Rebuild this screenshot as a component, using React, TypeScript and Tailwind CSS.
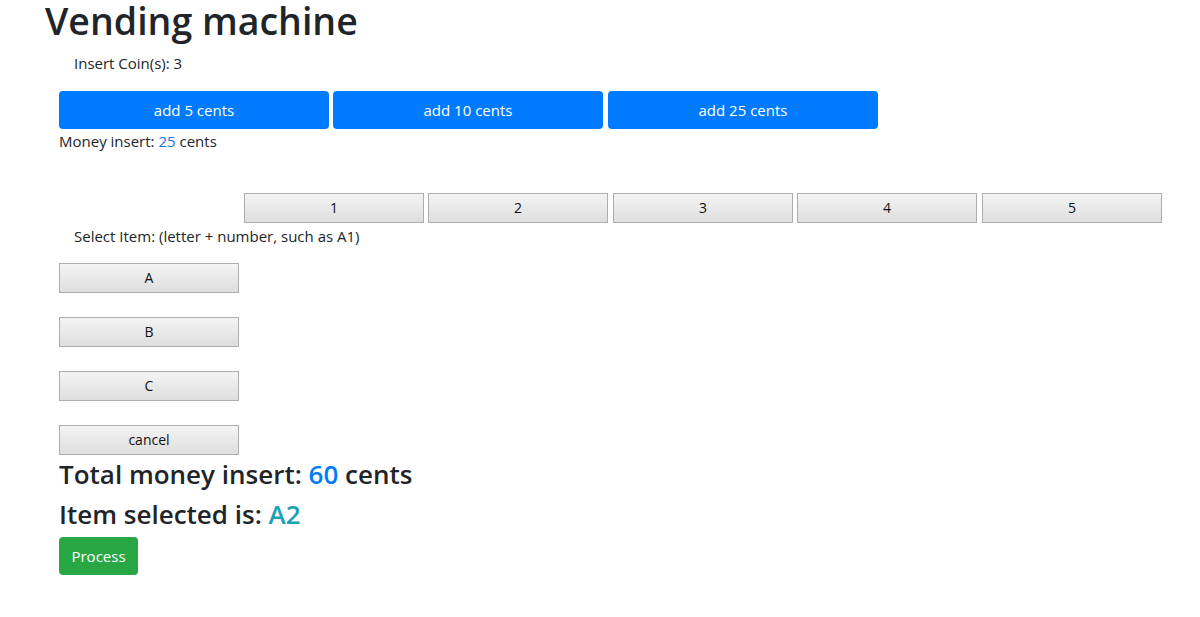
import React from "react";

const grayBtn =
  "w-[180px] h-[30px] border border-[#adadad] bg-gradient-to-b from-[#f4f4f4] to-[#dedede] text-[14px] text-[#111] leading-none";

export default function App() {
  return (
    <div className="w-[1200px] h-[617px] bg-white text-[#212529] font-['Open_Sans',sans-serif] overflow-hidden">
      <h1 className="pl-[45px] text-[37.5px] leading-[42px] font-semibold">Vending machine</h1>
      <p className="ml-[74px] mt-[11px] text-[15px] leading-[21px]">Insert Coin(s): 3</p>
      <div className="ml-[59px] mt-[17px] flex gap-[4px]">
        <button className="w-[270px] h-[38px] rounded-[4px] bg-[#007bff] text-white text-[15px]">add 5 cents</button>
        <button className="w-[270px] h-[38px] rounded-[4px] bg-[#007bff] text-white text-[15px]">add 10 cents</button>
        <button className="w-[270px] h-[38px] rounded-[4px] bg-[#007bff] text-white text-[15px] ml-[1px]">add 25 cents</button>
      </div>
      <p className="ml-[59px] mt-[2px] text-[15px] leading-[21px]">
        Money insert: <span className="text-[#1a73d9]">25</span> cents
      </p>
      <div className="ml-[244px] mt-[41px] flex gap-[4px]">
        {["1", "2", "3", "4", "5"].map((n, i) => (
          <button key={n} className={`${grayBtn} ${i === 2 || i === 4 ? "ml-[1px]" : ""}`}>
            {n}
          </button>
        ))}
      </div>
      <p className="ml-[74px] mt-[3px] text-[15px] leading-[21px]">Select Item: (letter + number, such as A1)</p>
      <div className="ml-[59px] mt-[16px] flex flex-col gap-[24px]">
        <button className={grayBtn}>A</button>
        <button className={grayBtn}>B</button>
        <button className={grayBtn}>C</button>
        <button className={grayBtn}>cancel</button>
      </div>
      <h3 className="ml-[59px] mt-[2px] text-[26px] leading-[34px] font-semibold">
        Total money insert: <span className="text-[#007bff]">60</span> cents
      </h3>
      <h3 className="ml-[59px] mt-[6px] text-[26px] leading-[34px] font-semibold">
        Item selected is: <span className="text-[#17a2b8]">A2</span>
      </h3>
      <button className="ml-[59px] mt-[6px] w-[79px] h-[38px] rounded-[4px] bg-[#28a745] text-white text-[15px]">Process</button>
    </div>
  );
}
